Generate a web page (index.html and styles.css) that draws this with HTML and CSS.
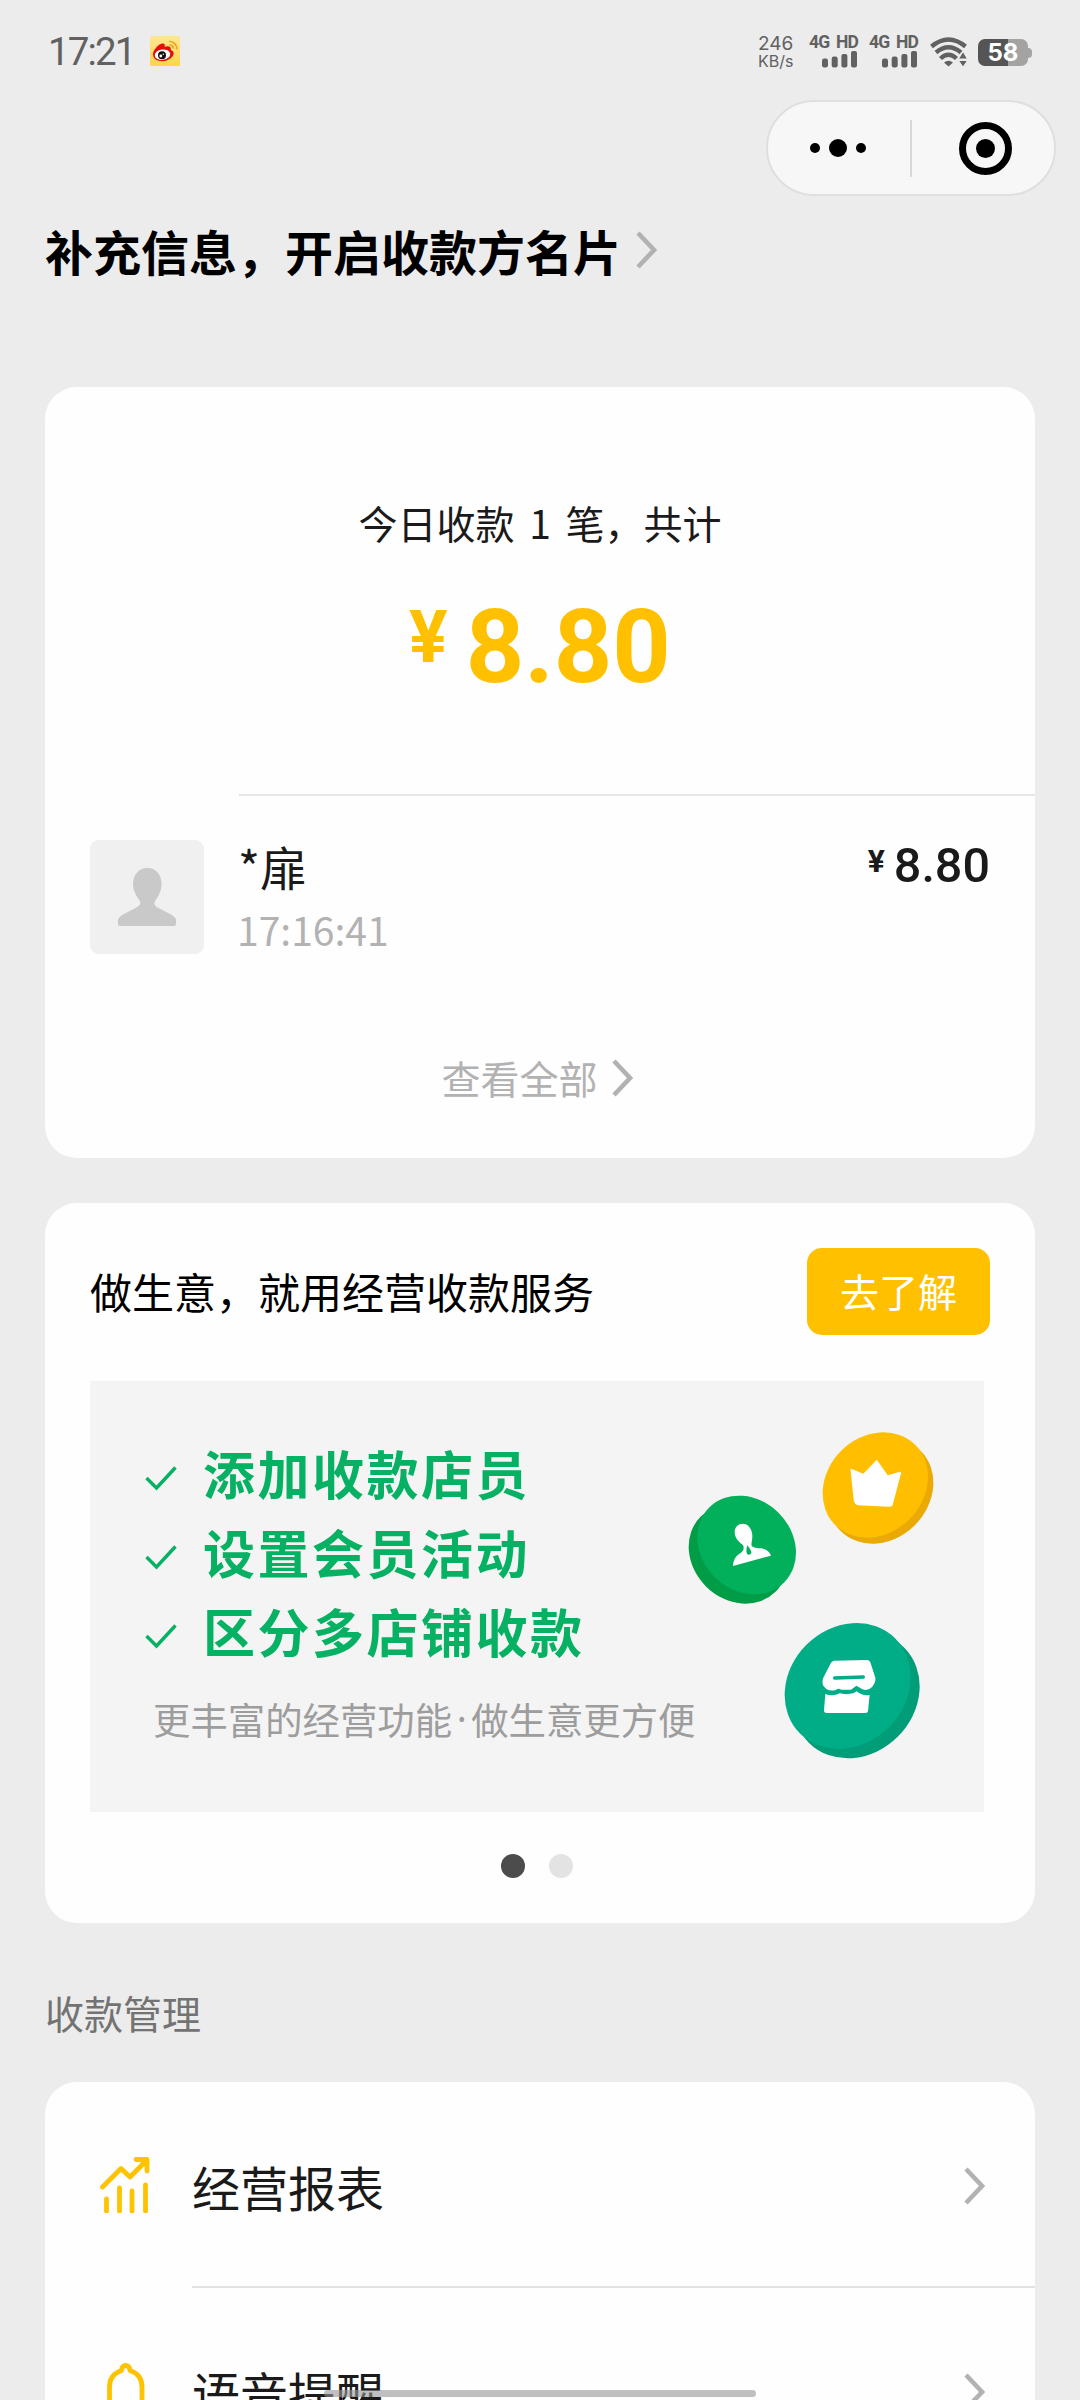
FILE: index.html
```html
<!DOCTYPE html>
<html lang="zh-CN">
<head>
<meta charset="utf-8">
<title>收款小账本</title>
<link rel="stylesheet" href="styles.css">
</head>
<body>
<div class="screen">
  <header class="status">
    <span class="clock">17:21</span>
    <svg class="weibo" viewBox="0 0 30 30">
      <defs><linearGradient id="wb" x1="0" y1="0" x2="0" y2="1"><stop offset="0" stop-color="#fde795"/><stop offset="1" stop-color="#fdd548"/></linearGradient></defs>
      <rect width="30" height="30" rx="1.5" fill="url(#wb)"/>
      <path d="M3 19C2.500 14 9 7.500 13 7.500C15 7.500 15 9.500 14.700 10.800C18 9.500 21.500 10 20.800 14C24 15 24.500 18 22.500 20.500C17.500 27 4 27 3 19Z" fill="#e60d0d"/>
      <ellipse cx="12.500" cy="18.700" rx="7.800" ry="5.200" fill="#fff" transform="rotate(-8 12.500 18.700)"/>
      <circle cx="12" cy="19.300" r="4" fill="#111"/><circle cx="10.800" cy="20" r="1.400" fill="#fff"/><circle cx="13.300" cy="18.300" r=".7" fill="#fff"/>
      <path d="M19 5.200A8 8 0 0 1 27 13.500M19.500 8.800A4.500 4.500 0 0 1 23.500 12.500" fill="none" stroke="#f0a422" stroke-width="1.600"/>
    </svg>
    <div class="speed"><span>246</span><span class="unit">KB/s</span></div>
    <div class="sim"><span>4G HD</span>
      <svg viewBox="0 0 36 17"><rect x="0" y="7.500" width="6" height="9" rx="2.200"/><rect x="9.700" y="5.500" width="6" height="11" rx="2.200"/><rect x="19.400" y="3" width="6" height="13.500" rx="2"/><rect x="29" y="0" width="6" height="16.500" rx="2"/></svg></div>
    <div class="sim"><span>4G HD</span>
      <svg viewBox="0 0 36 17"><rect x="0" y="7.500" width="6" height="9" rx="2.200"/><rect x="9.700" y="5.500" width="6" height="11" rx="2.200"/><rect x="19.400" y="3" width="6" height="13.500" rx="2"/><rect x="29" y="0" width="6" height="16.500" rx="2"/></svg></div>
    <svg class="wifi" viewBox="0 0 37 30">
      <g fill="none" stroke="#616161" stroke-width="4.400"><path d="M1.500 9.500Q18.500 -4.500 35.500 9.500"/><path d="M6 15.500Q18.500 5 31 15.500"/><path d="M10.500 21.500Q18.500 14 26.500 21.500"/></g>
      <path d="M14 25.500Q18.500 22 23 25.500L18.500 29.500Z" fill="#616161"/>
      <path d="M28.500 22L33 14.500L37.500 22ZM28.500 23.500L33 30L37.500 23.500Z" fill="#616161" stroke="#ececec" stroke-width="1"/>
    </svg>
    <div class="battery"><span>58</span></div>
  </header>

  <div class="capsule">
    <svg class="more" viewBox="0 0 56 18"><circle cx="5" cy="9" r="5"/><circle cx="28" cy="9" r="9"/><circle cx="51" cy="9" r="5"/></svg>
    <i class="bar"></i>
    <svg class="ring" viewBox="0 0 53 53"><circle cx="26.500" cy="26.500" r="23" fill="none" stroke="#000" stroke-width="7"/><circle cx="26.500" cy="26.500" r="9.500"/></svg>
  </div>

  <div class="headline"><h1>补充信息，开启收款方名片</h1>
    <svg class="chev" viewBox="0 0 21 38"><path d="M2 2L18 19L2 36"/></svg>
  </div>

  <section class="card summary">
    <p class="today">今日收款 1 笔，共计</p>
    <div class="total"><span class="yen">¥</span><span class="num">8.80</span></div>
    <div class="record">
      <svg class="avatar" viewBox="0 0 114 114"><rect width="114" height="114" rx="9" fill="#f0f0f0"/><path d="M57.500 28C66.500 28 71.500 35 71.500 44C71.500 51 68.500 56 65.500 60.500C63.500 64 64.500 65.500 67.500 67.500L81 74.500Q86 77.500 86 80V84Q86 86 84 86H30Q28 86 28 84V80Q28 77.500 33 74.500L46.500 67.500C50.500 65 51 63.500 49.500 60.500C46.500 56 43 51 43 44C43 35 48.500 28 57.500 28Z" fill="#c9c9c9"/></svg>
      <div class="who"><span class="name">*扉</span><span class="time">17:16:41</span></div>
      <div class="price"><span class="yen">¥</span><span class="num">8.80</span></div>
    </div>
    <div class="all"><span>查看全部</span><svg class="chev" viewBox="0 0 21 38"><path d="M2 2L18 19L2 36"/></svg></div>
  </section>

  <section class="card promo">
    <div class="promo-head"><h2>做生意，就用经营收款服务</h2><span class="button">去了解</span></div>
    <div class="banner">
      <div class="copy">
        <ul>
          <li><svg viewBox="0 0 32 25"><path d="M1.500 12L11.500 22L30.500 1.500"/></svg>添加收款店员</li>
          <li><svg viewBox="0 0 32 25"><path d="M1.500 12L11.500 22L30.500 1.500"/></svg>设置会员活动</li>
          <li><svg viewBox="0 0 32 25"><path d="M1.500 12L11.500 22L30.500 1.500"/></svg>区分多店铺收款</li>
        </ul>
        <p><span>更丰富的经营功能</span><span class="mid">·</span><span>做生意更方便</span></p>
      </div>
      <svg class="coins" viewBox="60 -57 912 1293">
        <ellipse cx="662" cy="273" rx="170" ry="145" transform="rotate(-45 662 273)" fill="#eaa905"/>
        <ellipse cx="646" cy="255" rx="170" ry="145" transform="rotate(-45 646 255)" fill="#ffbf00"/>
        <path d="M574 209L611 224L650 183L682 229L721 218L695 316Q692 318 686 318L594 313Q586 311 584 303Z" fill="#fff" stroke="#fff" stroke-width="5" stroke-linejoin="round"/>
        <ellipse cx="234" cy="463" rx="159" ry="136" transform="rotate(45 234 463)" fill="#019c46"/>
        <ellipse cx="260" cy="435" rx="159" ry="136" transform="rotate(45 260 435)" fill="#02b05c"/>
        <path d="M249 371C263 371 277 386 277 408C277 422 273 430 275 437C280 444 292 444 303 445C319 447 330 457 333 467L219 498C219 484 225 471 236 463C247 456 255 449 249 435C239 428 224 416 224 396C224 381 235 371 249 371Z" fill="#fff"/>
        <path d="M262 436Q275 452 274 460Q268 467 261 462Q257 452 262 436Z" fill="#02b05c"/>
        <ellipse cx="590" cy="886" rx="202" ry="175" transform="rotate(-45 590 886)" fill="#019c78"/>
        <ellipse cx="563" cy="858" rx="202" ry="175" transform="rotate(-45 563 858)" fill="#00ad87"/>
        <path d="M522 782L622 780Q629 781 631 787L646 833Q648 845 637 860Q623 875 606 867L589 857L573 869H544Q535 864 529 869Q505 878 490 857Q484 845 491 831L513 788Q517 783 522 782Z" fill="#fff"/>
        <path d="M524 834L610 831" fill="none" stroke="#00ad87" stroke-width="10" stroke-linecap="round"/>
        <path d="M496 882Q518 891 539 880Q558 885 580 880L590 874Q608 889 629 885L624 933Q623 939 617 939H500Q492 939 492 931Z" fill="#fff"/>
      </svg>
    </div>
    <div class="dots"><i class="on"></i><i></i></div>
  </section>

  <h3>收款管理</h3>
  <section class="card menu">
    <div class="row">
      <svg class="ico" viewBox="0 0 50 56"><path d="M2.500 30L21 11.500L30 20L46 4M36 2.500H47V14" /><path d="M6.500 42V54M19.500 31V54M32 34V54M45.500 28V54"/><path d="M38 2.500H47V12Z" fill="#fdc301" stroke="none"/></svg>
      <div class="cell"><span>经营报表</span><svg class="chev" viewBox="0 0 21 38"><path d="M2 2L18 19L2 36"/></svg></div>
    </div>
    <div class="row">
      <svg class="ico" viewBox="0 0 50 56"><path d="M9.500 56V24C9.500 15 14 10 21.500 7.500C21.500 .8 30 .8 30 7.500C37.500 10 42 15 42 24V56" /></svg>
      <div class="cell"><span>语音提醒</span><svg class="chev" viewBox="0 0 21 38"><path d="M2 2L18 19L2 36"/></svg></div>
    </div>
  </section>
  <div class="home"></div>
</div>
</body>
</html>
```
FILE: styles.css
```css
* { box-sizing: border-box; margin: 0; padding: 0; }
body { background: #ececec; font-family: "Noto Sans CJK SC", sans-serif; color: #1a1a1a; }
.screen { position: relative; width: 1080px; height: 2400px; overflow: hidden; padding: 0 45px; }
svg { display: block; flex: none; }
.chev { width: 21px; height: 38px; }
.chev path { fill: none; stroke: #b2b2b2; stroke-width: 4.6; }

.status { height: 100px; display: flex; align-items: flex-start; padding: 36px 0 0 3px; color: #616161; }
.clock { font: 38.5px/30px Roboto, sans-serif; width: 102px; letter-spacing: -1.9px; padding-top: 1px; }
.weibo { width: 30px; height: 30px; }
.speed { margin-left: 578px; width: 51px; display: flex; flex-direction: column; font: 19px/16px Inter, sans-serif; }
.speed .unit { font-size: 16px; line-height: 16px; padding-top: 1px; }
.sim { width: 60px; white-space: nowrap; }
.sim span { display: block; font: 700 17.500px/13px Roboto, sans-serif; letter-spacing: -.8px; word-spacing: 3px; }
.sim svg { width: 36px; height: 17px; margin: 2px 0 0 13px; fill: #616161; }
.wifi { width: 37px; height: 30px; margin: 1px 0 0 1px; }
.battery { position: relative; width: 50px; height: 27px; margin: 3px 0 0 11px; border-radius: 7px; background: linear-gradient(90deg, #555 60%, #a3a3a3 60%); text-align: center; }
.battery::after { content: ""; position: absolute; left: 50px; top: 9px; width: 4px; height: 10px; border-radius: 0 4px 4px 0; background: #a3a3a3; }
.battery span { display: block; font: 700 24px/28px Inter, sans-serif; color: #fff; }

.capsule { width: 290px; height: 96px; margin: 0 -21px 0 auto; border: 2px solid #dfdfdf; border-radius: 48px; background: #f7f7f7; display: flex; align-items: center; padding-left: 42px; }
.more { width: 56px; height: 18px; }
.bar { width: 2px; height: 57px; background: #d8d8d8; margin: 0 47px 0 44px; }
.ring { width: 53px; height: 53px; }

.headline { height: 108px; display: flex; align-items: center; gap: 15px; color: #000; padding-top: 4px; }
h1 { font-size: 48px; font-weight: 700; line-height: 70px; margin-top: -4px; }
.headline .chev { margin-top: -4px; }

.card { background: #fefefe; border-radius: 32px; }
.summary { margin-top: 83px; height: 771px; }
.today { padding-top: 107px; font-size: 39px; line-height: 56px; text-align: center; word-spacing: 6px; white-space: nowrap; }
.total { display: flex; justify-content: center; height: 100px; margin-top: 46px; font-family: Roboto, sans-serif; font-weight: 700; color: #ffc000; }
.total .yen { font-size: 72px; line-height: 73px; margin-right: 18px; margin-top: 5px; }
.total .num { font-size: 102px; line-height: 103px; }
.record { display: flex; margin: 98px 0 0 194px; border-top: 2px solid #e6e6e6; padding: 44px 45px 0 0; height: 206px; }
.avatar { width: 114px; height: 114px; margin-left: -149px; margin-right: 36px; }
.who { display: flex; flex-direction: column; flex: 1; }
.name { font-size: 47px; line-height: 56px; margin: -2px 0 2px -2px; }
.time { font-size: 39px; line-height: 56px; color: #b2b2b2; margin: 5px 0 0 -3px; }
.price { display: flex; font-family: Roboto, sans-serif; font-weight: 500; }
.price .yen { font-size: 32px; line-height: 32px; margin: 5px 9px 0 0; font-weight: 700; }
.price .num { font-size: 48.500px; line-height: 49px; margin-top: 1px; }
.all { display: flex; align-items: center; justify-content: center; gap: 14px; height: 56px; margin: 50px 0 0 -6px; color: #b2b2b2; font-size: 39px; line-height: 56px; }
.all span { margin-top: -3px; }

.promo { margin-top: 45px; height: 720px; padding: 45px 45px 0; }
.promo-head { display: flex; justify-content: space-between; align-items: center; height: 87px; }
h2 { font-size: 42px; line-height: 60px; font-weight: 400; color: #000; margin-top: -2px; }
.button { width: 183px; height: 87px; border-radius: 15px; background: #ffc000; color: #fff; font-size: 39px; line-height: 84px; text-align: center; }
.banner { display: flex; justify-content: space-between; width: 894px; height: 431px; margin-top: 46px; background: #f4f4f4; }
.copy { padding: 52px 0 0 56px; white-space: nowrap; }
ul { list-style: none; }
li { display: flex; align-items: center; height: 79px; font-size: 52px; font-weight: 700; letter-spacing: 2.500px; line-height: 79px; color: #06b163; }
li svg { width: 32px; height: 25px; margin: 12px 26px 0 -1px; fill: none; stroke: #06b163; stroke-width: 3.400; }
.copy p { display: flex; padding-left: 7px; margin-top: 22px; font-size: 37.400px; line-height: 54px; color: #9d9d9d; }
.mid { width: 19px; text-align: center; font-family: "Noto Sans", sans-serif; }
.coins { width: 304px; height: 431px; margin-left: -40px; }
.dots { display: flex; gap: 24px; margin: 42px 0 0 411px; }
.dots i { width: 24px; height: 24px; border-radius: 50%; background: #e3e3e3; }
.dots .on { background: #4c4c4c; }

h3 { font-size: 39px; line-height: 56px; font-weight: 400; color: #737373; margin: 61px 0 42px; }
.menu { height: 400px; }
.row { display: flex; height: 206px; }
.ico { width: 50px; height: 56px; margin: 75px 42px 0 55px; fill: none; stroke: #fdc301; stroke-width: 4.800; stroke-linecap: round; stroke-linejoin: round; }
.cell { flex: 1; display: flex; align-items: center; justify-content: space-between; padding: 3px 50px 0 0; border-bottom: 2px solid #e2e2e2; font-size: 48px; }
.home { position: absolute; left: 324px; top: 2390px; width: 432px; height: 7px; border-radius: 4px; background: rgba(150, 150, 150, .6); }
```
